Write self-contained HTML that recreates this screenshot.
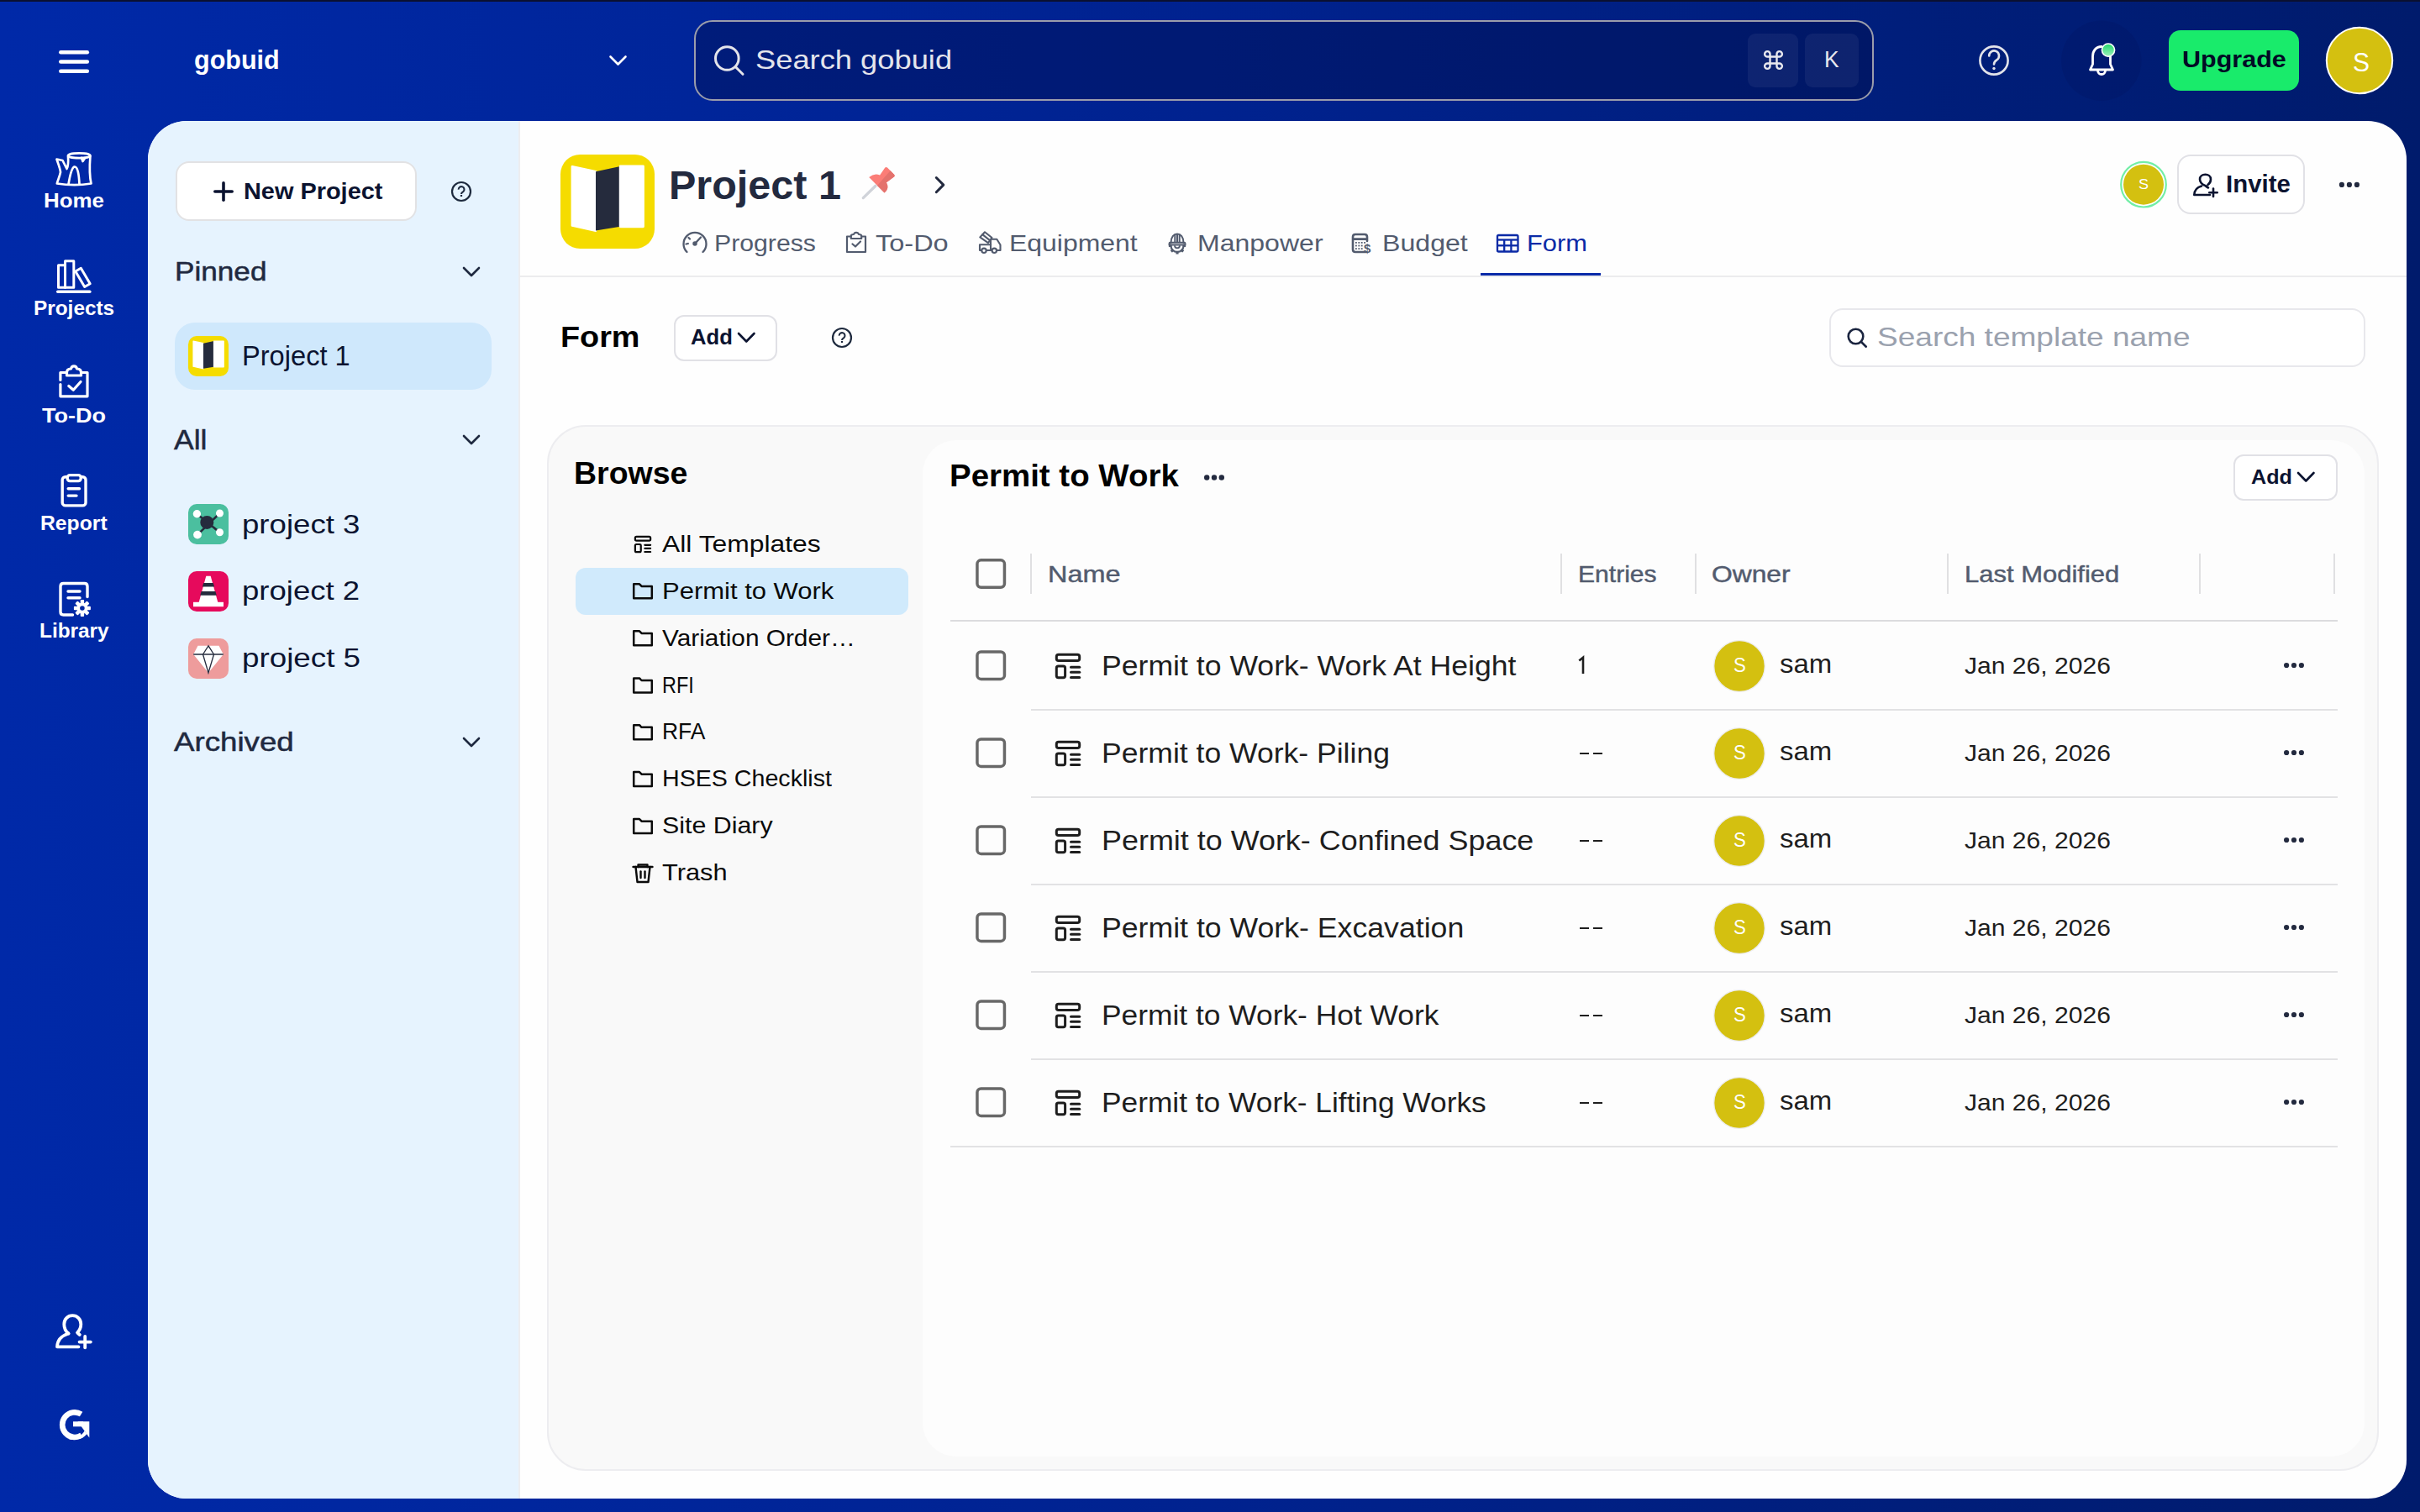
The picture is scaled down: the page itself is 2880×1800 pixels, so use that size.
<!DOCTYPE html>
<html><head><meta charset="utf-8"><title>gobuid - Form</title>
<style>
html,body{margin:0;padding:0;width:2880px;height:1800px;overflow:hidden;}
body{position:relative;font-family:"Liberation Sans",sans-serif;background:linear-gradient(90deg,#0029a8 0%,#00228f 50%,#001b6c 100%);}
.b{position:absolute;}
.t{position:absolute;white-space:nowrap;line-height:1;transform-origin:0 0;display:block;}
svg.ic{position:absolute;left:0;top:0;}
</style></head><body>
<div class="b" style="left:176px;top:144px;width:2688px;height:1640px;border-radius:46px;background:#fefefe;overflow:hidden;"></div><div class="b" style="left:176px;top:144px;width:441px;height:1640px;border-radius:46px 0 0 46px;background:#e6f3fe;"></div><div class="b" style="left:617px;top:144px;width:2px;height:1640px;background:#ededf0;"></div><div class="b" style="left:0px;top:0px;width:2880px;height:1.5px;background:#0a1030;"></div><div class="b" style="left:826px;top:24px;width:1404px;height:96px;box-sizing:border-box;border:2px solid #9a9dab;border-radius:22px;background:rgba(0,8,60,0.32);"></div><div class="b" style="left:2080px;top:40px;width:60px;height:64px;border-radius:9px;background:rgba(255,255,255,0.055);"></div><div class="b" style="left:2148px;top:40px;width:64px;height:64px;border-radius:9px;background:rgba(255,255,255,0.055);"></div><div class="b" style="left:2581px;top:36px;width:155px;height:72px;border-radius:14px;background:#19eb6b;"></div><div class="b" style="left:208.5px;top:192.4px;width:287.5px;height:70.2px;box-sizing:border-box;border:2px solid #e2e2e4;border-radius:16px;background:#fff;"></div><div class="b" style="left:208px;top:384px;width:377px;height:80px;border-radius:24px;background:#cfe8fc;"></div><div class="b" style="left:1762px;top:324.5px;width:143px;height:4px;background:#0a2aa8;"></div><div class="b" style="left:618px;top:328px;width:2246px;height:2px;background:#ececee;"></div><div class="b" style="left:2591.4px;top:184.2px;width:152px;height:71.1px;box-sizing:border-box;border:2px solid #e1e1e6;border-radius:16px;background:#fff;"></div><div class="b" style="left:801.7px;top:374.5px;width:123.5px;height:55px;box-sizing:border-box;border:2px solid #e1e1e6;border-radius:12px;background:#fff;"></div><div class="b" style="left:2176.7px;top:366.8px;width:638.3px;height:70.2px;box-sizing:border-box;border:2px solid #e8e8ec;border-radius:16px;background:#fff;"></div><div class="b" style="left:651px;top:506px;width:2180px;height:1245px;box-sizing:border-box;border:2px solid #ededf0;border-radius:46px;background:#f9f9f9;"></div><div class="b" style="left:685px;top:676px;width:396px;height:56px;border-radius:12px;background:#d0eafc;"></div><div class="b" style="left:1098px;top:524px;width:1716px;height:1210px;border-radius:40px;background:#fdfdfd;"></div><div class="b" style="left:2658px;top:541px;width:123.5px;height:54.5px;box-sizing:border-box;border:2px solid #e1e1e6;border-radius:12px;background:#fff;"></div><div class="b" style="left:1226px;top:659px;width:2px;height:48px;background:#e0e0e2;"></div><div class="b" style="left:1857px;top:659px;width:2px;height:48px;background:#e0e0e2;"></div><div class="b" style="left:2017px;top:659px;width:2px;height:48px;background:#e0e0e2;"></div><div class="b" style="left:2317px;top:659px;width:2px;height:48px;background:#e0e0e2;"></div><div class="b" style="left:2617px;top:659px;width:2px;height:48px;background:#e0e0e2;"></div><div class="b" style="left:2777px;top:659px;width:2px;height:48px;background:#e0e0e2;"></div><div class="b" style="left:1131px;top:737.8px;width:1651px;height:2px;background:#dcdcde;"></div><div class="b" style="left:1227px;top:844px;width:1555px;height:2px;background:#e2e2e4;"></div><div class="b" style="left:1879.5px;top:895.5px;width:11px;height:2.2px;background:#1e1e1e;"></div><div class="b" style="left:1895.5px;top:895.5px;width:11px;height:2.2px;background:#1e1e1e;"></div><div class="b" style="left:1227px;top:948px;width:1555px;height:2px;background:#e2e2e4;"></div><div class="b" style="left:1879.5px;top:999.5px;width:11px;height:2.2px;background:#1e1e1e;"></div><div class="b" style="left:1895.5px;top:999.5px;width:11px;height:2.2px;background:#1e1e1e;"></div><div class="b" style="left:1227px;top:1052px;width:1555px;height:2px;background:#e2e2e4;"></div><div class="b" style="left:1879.5px;top:1103.5px;width:11px;height:2.2px;background:#1e1e1e;"></div><div class="b" style="left:1895.5px;top:1103.5px;width:11px;height:2.2px;background:#1e1e1e;"></div><div class="b" style="left:1227px;top:1156px;width:1555px;height:2px;background:#e2e2e4;"></div><div class="b" style="left:1879.5px;top:1207.5px;width:11px;height:2.2px;background:#1e1e1e;"></div><div class="b" style="left:1895.5px;top:1207.5px;width:11px;height:2.2px;background:#1e1e1e;"></div><div class="b" style="left:1227px;top:1260px;width:1555px;height:2px;background:#e2e2e4;"></div><div class="b" style="left:1879.5px;top:1311.5px;width:11px;height:2.2px;background:#1e1e1e;"></div><div class="b" style="left:1895.5px;top:1311.5px;width:11px;height:2.2px;background:#1e1e1e;"></div><div class="b" style="left:1131px;top:1364px;width:1651px;height:2px;background:#e2e2e4;"></div>
<svg class="ic" width="2880" height="1800" viewBox="0 0 2880 1800">
<g stroke="#fff" stroke-width="4.5" stroke-linecap="round"><line x1="72.3" y1="62.3" x2="103.8" y2="62.3"/><line x1="72.3" y1="73.6" x2="103.8" y2="73.6"/><line x1="72.3" y1="84.8" x2="103.8" y2="84.8"/></g><polyline points="726.5,67.5 735.5,76.5 744.5,67.5" fill="none" stroke="#fff" stroke-width="2.6" stroke-linecap="round" stroke-linejoin="round"/><g fill="none" stroke="#e3e4ea" stroke-width="3" stroke-linecap="round"><circle cx="865.3" cy="69.5" r="13.8"/><line x1="875.5" y1="79.8" x2="884" y2="88.3"/></g><g transform="translate(2099.5,60.5)" fill="none" stroke="#e8e8ee" stroke-width="2.4"><path d="M7,7 H15 V15 H7 Z"/><path d="M7,7 V4 A3.2,3.2 0 1 0 4,7 H7"/><path d="M15,7 V4 A3.2,3.2 0 1 1 18,7 H15"/><path d="M7,15 V18 A3.2,3.2 0 1 1 4,15 H7"/><path d="M15,15 V18 A3.2,3.2 0 1 0 18,15 H15"/></g><circle cx="2373" cy="72" r="16.6" fill="none" stroke="#e3e4ea" stroke-width="2.6"/><path d="M2367.2,66.5 A5.9,5.9 0 1 1 2376.3,71.3 C2374,72.8 2373,74 2373,76.5" fill="none" stroke="#e3e4ea" stroke-width="2.6" stroke-linecap="round"/><circle cx="2373" cy="81.5" r="1.7" fill="#e3e4ea"/><circle cx="2500.8" cy="72.2" r="47.7" fill="rgba(0,5,50,0.09)"/><g fill="none" stroke="#fff" stroke-width="2.8" stroke-linejoin="round" stroke-linecap="round"><path d="M2501,55.5 C2494,55.5 2490.5,61 2490.5,67 V76.5 L2487.5,83 H2514.5 L2511.5,76.5 V67"/><path d="M2496.5,84 A4.5,4.5 0 0 0 2505.5,84"/></g><defs><linearGradient id="gd" x1="0" y1="0" x2="0" y2="1"><stop offset="0" stop-color="#1fd86a"/><stop offset="1" stop-color="#9ff2bd"/></linearGradient></defs><circle cx="2509" cy="59.6" r="7.6" fill="url(#gd)" stroke="#fff" stroke-width="1.6"/><circle cx="2808" cy="72" r="39.2" fill="#d4c010" stroke="#ffffff" stroke-width="2"/><g fill="none" stroke="#fff" stroke-width="2.7" stroke-linejoin="round" stroke-linecap="round"><ellipse cx="94.2" cy="185.3" rx="13.2" ry="2.9"/><path d="M81,186 C81.5,193 81,198 79.5,201 L74.5,191 L67.5,189.5 C69.5,196 71.5,200 72,205 C71,210 69,214 67.8,218.5 C81,220.5 96,220.5 108.5,218.5 C106.5,210 106.5,198 107.4,186"/><path d="M81.5,219.5 C83,210 85,200 88.5,198.5 C92.5,198 94,208 94.5,219.5"/><path d="M97,188 L98.5,192 L101,188.2"/></g><g fill="none" stroke="#fff" stroke-width="3" stroke-linejoin="round" stroke-linecap="round"><rect x="69.5" y="315.8" width="8" height="26.5"/><rect x="77.5" y="310.8" width="10.3" height="31.5"/><path d="M89.8,323 L96.3,319.3 L107.2,337.8 L100.7,341.5 Z"/><line x1="68.8" y1="347.2" x2="106.8" y2="347.2" stroke-width="3.6"/></g><g fill="none" stroke="#fff" stroke-width="3.2" stroke-linejoin="round" stroke-linecap="round"><path d="M79,443.5 H71.9 V452.5 M71.9,457.5 V471.8 H104 V443.5 H97"/><path d="M79.5,447 V443.5 C79.5,440 82,439 84.5,439 C85,436.5 86.5,435.8 88,435.8 C89.5,435.8 91,436.5 91.5,439 C94,439 96.5,440 96.5,443.5 V447 Z"/><polyline points="81.8,459.5 87.3,464.3 96,454.5"/></g><g fill="none" stroke="#fff" stroke-width="3.4" stroke-linejoin="round" stroke-linecap="round"><rect x="74.2" y="567.7" width="27.8" height="34.2" rx="3.5"/><rect x="80.2" y="565.6" width="16" height="7" rx="3" fill="#0027a2"/><line x1="81.2" y1="581.8" x2="94.5" y2="581.8"/><line x1="81.2" y1="590.1" x2="91" y2="590.1"/></g><g fill="none" stroke="#fff" stroke-width="3.4" stroke-linejoin="round" stroke-linecap="round"><path d="M104,710.5 V698 Q104,694.5 100.5,694.5 H75.5 Q72,694.5 72,698 V728.5 Q72,732 75.5,732 H86.5"/><line x1="81" y1="704" x2="95" y2="704"/><line x1="81" y1="711.7" x2="95" y2="711.7"/></g><g transform="translate(97.9,724)" fill="#fff"><circle r="6.6"/><rect x="-2.2" y="-10" width="4.4" height="5" rx="1" transform="rotate(0)"/><rect x="-2.2" y="-10" width="4.4" height="5" rx="1" transform="rotate(45)"/><rect x="-2.2" y="-10" width="4.4" height="5" rx="1" transform="rotate(90)"/><rect x="-2.2" y="-10" width="4.4" height="5" rx="1" transform="rotate(135)"/><rect x="-2.2" y="-10" width="4.4" height="5" rx="1" transform="rotate(180)"/><rect x="-2.2" y="-10" width="4.4" height="5" rx="1" transform="rotate(225)"/><rect x="-2.2" y="-10" width="4.4" height="5" rx="1" transform="rotate(270)"/><rect x="-2.2" y="-10" width="4.4" height="5" rx="1" transform="rotate(315)"/><circle r="2.8" fill="#0027a2"/></g><g fill="none" stroke="#fff" stroke-width="3.8" stroke-linecap="round" stroke-linejoin="round"><path d="M81.5,1587.5 C77.5,1584.5 76.3,1580 76.3,1576.5 C76.3,1570.5 80.5,1566.2 86.3,1566.2 C92,1566.2 96.3,1570.5 96.3,1576.5 C96.3,1580.5 94.5,1584 92,1586.5 L94.8,1589"/><path d="M81.5,1587.5 C72.5,1590.5 68.2,1596.5 68,1603.3 H93.5"/><line x1="101.2" y1="1591" x2="101.2" y2="1604.3"/><line x1="94.6" y1="1597.6" x2="107.8" y2="1597.6"/></g><g fill="#fff"><path d="M96.6,1683.5 A14.8,14.8 0 1 0 97,1708.6" fill="none" stroke="#fff" stroke-width="6.6"/><rect x="87" y="1692.3" width="12" height="6"/><polygon points="92.5,1692.3 106.3,1692.3 106.3,1711.6"/><path d="M80,1712.5 C88,1714.5 96,1711 100.5,1703.5 L103.5,1707 C98.5,1713.5 89,1716 80,1712.5 Z"/></g><g stroke="#0b1330" stroke-width="3.6" stroke-linecap="round"><line x1="266" y1="217.8" x2="266" y2="238.2"/><line x1="255.8" y1="228" x2="276.2" y2="228"/></g><circle cx="549" cy="228" r="11" fill="none" stroke="#1e2a3e" stroke-width="2.2"/><path d="M545.7,225.6 A3.4,3.4 0 1 1 551.3,228.1 C549.8,229.1 549,229.8 549,230.9" fill="none" stroke="#1e2a3e" stroke-width="2.09" stroke-linecap="butt"/><rect x="547.9" y="232" width="2.2" height="2" fill="#1e2a3e"/><polyline points="552,319 561.0,328 570,319" fill="none" stroke="#1f2940" stroke-width="2.6" stroke-linecap="round" stroke-linejoin="round"/><rect x="224" y="400" width="48" height="48" rx="10.0" fill="#f5dc00"/><polygon points="230.00,406.20 242.00,408.70 242.00,438.80 230.00,436.20" fill="#fff" stroke="#fff" stroke-width="1.20" stroke-linejoin="round"/><polygon points="242.00,408.70 254.50,406.00 254.50,436.80 242.00,438.80" fill="#252b3d"/><polygon points="254.50,406.00 266.20,406.00 266.20,436.80 254.50,436.80" fill="#fff" stroke="#fff" stroke-width="1.20" stroke-linejoin="round"/><polyline points="552,519 561.0,528 570,519" fill="none" stroke="#1f2940" stroke-width="2.6" stroke-linecap="round" stroke-linejoin="round"/><rect x="224" y="600" width="48" height="48" rx="10" fill="#4bbf9f"/><g stroke="#252b3d" stroke-width="2.6"><line x1="234.4" y1="611.8" x2="261.5" y2="633.8"/><line x1="261.5" y1="611" x2="235" y2="636.6"/></g><circle cx="246.3" cy="621.9" r="8" fill="#252b3d"/><g fill="#fff"><circle cx="234.4" cy="611.8" r="4.7"/><circle cx="261.5" cy="611" r="4.5"/><circle cx="235" cy="636.6" r="4.9"/><circle cx="261.5" cy="633.8" r="4.5"/></g><rect x="224" y="680" width="48" height="48" rx="10" fill="#e60a5c"/><polygon points="245.3,685.7 250.7,685.7 259.3,717 236.7,717" fill="#fff"/><rect x="230" y="716.8" width="36" height="5.4" fill="#fff"/><polygon points="242.2,694 253.8,694 255.1,698.5 240.9,698.5" fill="#252b3d"/><polygon points="239.6,703.9 256.4,703.9 257.8,708.8 238.2,708.8" fill="#252b3d"/><rect x="224" y="760" width="48" height="48" rx="10" fill="#ee9c9c"/><polygon points="235.5,768.8 260.5,768.8 265.8,779 248,801 230.2,779" fill="#fff"/><g fill="none" stroke="#252b3d" stroke-width="1.3"><line x1="230.2" y1="779" x2="265.8" y2="779"/><polygon points="248,768.8 241.5,779 248,801 254.5,779"/></g><polyline points="552,879 561.0,888 570,879" fill="none" stroke="#1f2940" stroke-width="2.6" stroke-linecap="round" stroke-linejoin="round"/><rect x="667" y="184" width="112" height="112" rx="23.3" fill="#f5dc00"/><polygon points="681.00,198.47 709.00,204.30 709.00,274.53 681.00,268.47" fill="#fff" stroke="#fff" stroke-width="2.80" stroke-linejoin="round"/><polygon points="709.00,204.30 738.17,198.00 738.17,269.87 709.00,274.53" fill="#252b3d"/><polygon points="738.17,198.00 765.47,198.00 765.47,269.87 738.17,269.87" fill="#fff" stroke="#fff" stroke-width="2.80" stroke-linejoin="round"/><defs><clipPath id="pinR"><polygon points="1090.1,168.6 1143.2,215.4 1065.2,304 1012.1,257.1"/></clipPath></defs><line x1="1027.3" y1="235.6" x2="1042" y2="221.3" stroke="#d0d3d9" stroke-width="3.3" stroke-linecap="round"/><path id="pinH" d="M1034.2,211 Q1040.5,205.5 1047.1,208.5 L1053.3,199.6 Q1054.6,198.3 1056,199.6 L1064.3,208 Q1065.4,209.5 1064,210.6 L1054.9,217.2 Q1058.8,224.5 1052.5,229.5 Z" fill="#fb7d77"/><path d="M1034.2,211 Q1040.5,205.5 1047.1,208.5 L1053.3,199.6 Q1054.6,198.3 1056,199.6 L1064.3,208 Q1065.4,209.5 1064,210.6 L1054.9,217.2 Q1058.8,224.5 1052.5,229.5 Z" fill="#e4726d" clip-path="url(#pinR)"/><polyline points="1114.3,211.5 1122.8,220.1 1114.3,228.7" fill="none" stroke="#232a3f" stroke-width="3" stroke-linecap="round" stroke-linejoin="round"/><g fill="none" stroke="#525b6e" stroke-width="2.3" stroke-linecap="round" stroke-linejoin="round"><path d="M817.5,300 A13.5,13.5 0 1 1 836.5,300"/><line x1="827" y1="290" x2="834" y2="282.5"/><circle cx="827" cy="290" r="1.6" fill="#525b6e"/><line x1="816.5" y1="290.5" x2="818.8" y2="290"/><line x1="819.5" y1="283" x2="821" y2="284.5"/></g><g fill="none" stroke="#525b6e" stroke-width="2.2" stroke-linejoin="round" stroke-linecap="round"><path d="M1012.5,281.5 H1008 V300 H1030 V281.5 H1025.5"/><path d="M1012.8,284 V281 C1012.8,279.5 1014,279 1016,279 C1016.5,277.3 1017.8,276.8 1019,276.8 C1020.2,276.8 1021.5,277.3 1022,279 C1024,279 1025.2,279.5 1025.2,281 V284 Z"/><polyline points="1014.5,290.5 1018,293.5 1024,287.5"/></g><g fill="none" stroke="#525b6e" stroke-width="2.1" stroke-linejoin="round" stroke-linecap="round"><path d="M1166,291.2 H1179 V284.8 H1186.3 L1190.5,291.5 V298 H1166 Z"/><line x1="1179" y1="291.2" x2="1179" y2="298"/><path d="M1166.3,282.4 L1172,276.3 L1180.5,283 L1176,289.2 Z"/><line x1="1169.2" y1="279.2" x2="1178" y2="286.1"/><circle cx="1171" cy="298.3" r="2.7" fill="#fff"/><circle cx="1183.3" cy="298.3" r="2.7" fill="#fff"/></g><g fill="none" stroke="#525b6e" stroke-width="2" stroke-linejoin="round" stroke-linecap="round"><path d="M1393.5,289 C1393.5,282 1397,278.5 1401,278.5 C1405,278.5 1408.5,282 1408.5,289"/><rect x="1391.5" y="288.8" width="19" height="2.8" rx="1.2"/><line x1="1398.3" y1="280" x2="1398.3" y2="288"/><line x1="1401" y1="279" x2="1401" y2="288"/><line x1="1403.7" y1="280" x2="1403.7" y2="288"/></g><g transform="translate(1401,292.3)"><path d="M-7.6,0 A7.6,7.6 0 0 0 7.6,0" fill="none" stroke="#525b6e" stroke-width="2.2"/><path d="M-3,0 A3,3 0 0 0 3,0" fill="none" stroke="#525b6e" stroke-width="1.8"/><g fill="#525b6e"><rect x="-1.6" y="-10.2" width="3.2" height="3.6" rx="0.6" transform="rotate(90)"/><rect x="-1.6" y="-10.2" width="3.2" height="3.6" rx="0.6" transform="rotate(135)"/><rect x="-1.6" y="-10.2" width="3.2" height="3.6" rx="0.6" transform="rotate(180)"/><rect x="-1.6" y="-10.2" width="3.2" height="3.6" rx="0.6" transform="rotate(225)"/><rect x="-1.6" y="-10.2" width="3.2" height="3.6" rx="0.6" transform="rotate(270)"/></g></g><g fill="none" stroke="#525b6e" stroke-width="2.6" stroke-linejoin="round" stroke-linecap="round"><path d="M1626,300 H1613 Q1610,300 1610,297 V282 Q1610,279 1613,279 H1624 Q1627,279 1627,282 V287"/><line x1="1610.5" y1="284.6" x2="1626.5" y2="284.6"/></g><g fill="#525b6e"><rect x="1613.0" y="288.0" width="1.8" height="1.8"/><rect x="1613.0" y="291.6" width="1.8" height="1.8"/><rect x="1613.0" y="295.2" width="1.8" height="1.8"/><rect x="1616.4" y="288.0" width="1.8" height="1.8"/><rect x="1616.4" y="291.6" width="1.8" height="1.8"/><rect x="1616.4" y="295.2" width="1.8" height="1.8"/><rect x="1619.8" y="288.0" width="1.8" height="1.8"/><rect x="1619.8" y="291.6" width="1.8" height="1.8"/><rect x="1619.8" y="295.2" width="1.8" height="1.8"/><rect x="1623.2" y="288.0" width="1.8" height="1.8"/></g><text x="1623" y="301" font-family="Liberation Sans" font-size="15" font-weight="700" fill="#525b6e">$</text><g fill="none" stroke="#0b2aa6" stroke-width="2.3" stroke-linejoin="round"><rect x="1782" y="280" width="24.5" height="19.5" rx="1.5"/><line x1="1782" y1="285.5" x2="1806.5" y2="285.5"/><line x1="1782" y1="292.3" x2="1806.5" y2="292.3"/><line x1="1790.2" y1="285.5" x2="1790.2" y2="299.5"/><line x1="1798.4" y1="285.5" x2="1798.4" y2="299.5"/></g><circle cx="2551" cy="219.7" r="26.8" fill="#fff" stroke="#72eea6" stroke-width="2.2"/><circle cx="2551" cy="219.7" r="24" fill="#d4c010"/><g fill="none" stroke="#0b1330" stroke-width="2.6" stroke-linecap="round" stroke-linejoin="round"><path d="M2628,223.5 C2626,222.5 2624.5,221 2624.5,221 C2620.5,220 2618,216.5 2618,213.5 C2618,209.8 2621,207.8 2624.5,207.8 C2628,207.8 2631,209.8 2631,213.5 C2631,216.5 2629.5,218.5 2627.5,220"/><path d="M2620,221.5 C2614.5,223 2611.5,227 2611.3,232 H2630"/><line x1="2634" y1="224.5" x2="2634" y2="234"/><line x1="2629.3" y1="229.3" x2="2638.7" y2="229.3"/></g><circle cx="2786.9" cy="219.9" r="3.1" fill="#232a3f"/><circle cx="2795.9" cy="219.9" r="3.1" fill="#232a3f"/><circle cx="2804.9" cy="219.9" r="3.1" fill="#232a3f"/><polyline points="879,397 888.25,406.5 897.5,397" fill="none" stroke="#0b1330" stroke-width="2.6" stroke-linecap="round" stroke-linejoin="round"/><circle cx="1002" cy="402" r="11" fill="none" stroke="#1e2a3e" stroke-width="2.2"/><path d="M998.7,399.6 A3.4,3.4 0 1 1 1004.3,402.1 C1002.8,403.1 1002,403.8 1002,404.9" fill="none" stroke="#1e2a3e" stroke-width="2.09" stroke-linecap="butt"/><rect x="1000.9" y="406" width="2.2" height="2" fill="#1e2a3e"/><g fill="none" stroke="#1b2540" stroke-width="2.6" stroke-linecap="round"><circle cx="2208.5" cy="400.5" r="8.8"/><line x1="2215" y1="407" x2="2220.8" y2="412.7"/></g><g fill="none" stroke="#0a0a0a" stroke-width="2.2" stroke-linecap="round" stroke-linejoin="round"><rect x="755.87" y="638.87" width="18.27" height="4.80" rx="1.60"/><rect x="755.87" y="648.00" width="6.87" height="9.13" rx="1.47"/><line x1="767.33" y1="648.80" x2="774.13" y2="648.80"/><line x1="767.33" y1="652.87" x2="774.13" y2="652.87"/><line x1="767.33" y1="657.00" x2="774.13" y2="657.00"/></g><path d="M754.2,712.3000000000001 V695.3000000000001 H761 L763.5,697.9 H775.8 V712.3000000000001 Z" fill="none" stroke="#0a0a0a" stroke-width="2.5" stroke-linejoin="round"/><path d="M754.2,768.3000000000001 V751.3000000000001 H761 L763.5,753.9 H775.8 V768.3000000000001 Z" fill="none" stroke="#0a0a0a" stroke-width="2.5" stroke-linejoin="round"/><path d="M754.2,824.4 V807.4 H761 L763.5,809.9999999999999 H775.8 V824.4 Z" fill="none" stroke="#0a0a0a" stroke-width="2.5" stroke-linejoin="round"/><path d="M754.2,880.2 V863.2 H761 L763.5,865.8 H775.8 V880.2 Z" fill="none" stroke="#0a0a0a" stroke-width="2.5" stroke-linejoin="round"/><path d="M754.2,936.1 V919.1 H761 L763.5,921.6999999999999 H775.8 V936.1 Z" fill="none" stroke="#0a0a0a" stroke-width="2.5" stroke-linejoin="round"/><path d="M754.2,992.1 V975.1 H761 L763.5,977.6999999999999 H775.8 V992.1 Z" fill="none" stroke="#0a0a0a" stroke-width="2.5" stroke-linejoin="round"/><g fill="none" stroke="#0a0a0a" stroke-width="2.4" stroke-linejoin="round" stroke-linecap="round"><line x1="753.5" y1="1032.0" x2="776.5" y2="1032.0"/><path d="M759.5,1032.0 V1029.5 H770.5 V1032.0"/><path d="M756.5,1032.0 L758.5,1050.0 H771.5 L773.5,1032.0"/><line x1="762.5" y1="1037.5" x2="762.5" y2="1045.0"/><line x1="767.5" y1="1037.5" x2="767.5" y2="1045.0"/></g><circle cx="1436.2" cy="568.5" r="3.2" fill="#232a3f"/><circle cx="1445.0" cy="568.5" r="3.2" fill="#232a3f"/><circle cx="1453.8" cy="568.5" r="3.2" fill="#232a3f"/><polyline points="2735,563 2744.25,572.5 2753.5,563" fill="none" stroke="#0b1330" stroke-width="2.6" stroke-linecap="round" stroke-linejoin="round"/><rect x="1162.95" y="666.85" width="32.5" height="32.5" rx="4.5" fill="none" stroke="#686868" stroke-width="3.5"/><rect x="1162.95" y="775.95" width="32.5" height="32.5" rx="4.5" fill="none" stroke="#686868" stroke-width="3.5"/><g fill="none" stroke="#1e1e1e" stroke-width="3" stroke-linecap="round" stroke-linejoin="round"><rect x="1257.30" y="779.30" width="27.40" height="7.20" rx="2.40"/><rect x="1257.30" y="793.00" width="10.30" height="13.70" rx="2.20"/><line x1="1274.50" y1="794.20" x2="1284.70" y2="794.20"/><line x1="1274.50" y1="800.30" x2="1284.70" y2="800.30"/><line x1="1274.50" y1="806.50" x2="1284.70" y2="806.50"/></g><path d="M1879.3,786.5 L1884,782.8 V802" fill="none" stroke="#1e1e1e" stroke-width="2.6" stroke-linejoin="miter"/><circle cx="2070" cy="793" r="30.3" fill="#d4c010" stroke="#ececec" stroke-width="1.3"/><circle cx="2721.1" cy="792" r="3.1" fill="#232a3f"/><circle cx="2730.0" cy="792" r="3.1" fill="#232a3f"/><circle cx="2738.9" cy="792" r="3.1" fill="#232a3f"/><rect x="1162.95" y="879.95" width="32.5" height="32.5" rx="4.5" fill="none" stroke="#686868" stroke-width="3.5"/><g fill="none" stroke="#1e1e1e" stroke-width="3" stroke-linecap="round" stroke-linejoin="round"><rect x="1257.30" y="883.30" width="27.40" height="7.20" rx="2.40"/><rect x="1257.30" y="897.00" width="10.30" height="13.70" rx="2.20"/><line x1="1274.50" y1="898.20" x2="1284.70" y2="898.20"/><line x1="1274.50" y1="904.30" x2="1284.70" y2="904.30"/><line x1="1274.50" y1="910.50" x2="1284.70" y2="910.50"/></g><circle cx="2070" cy="897" r="30.3" fill="#d4c010" stroke="#ececec" stroke-width="1.3"/><circle cx="2721.1" cy="896" r="3.1" fill="#232a3f"/><circle cx="2730.0" cy="896" r="3.1" fill="#232a3f"/><circle cx="2738.9" cy="896" r="3.1" fill="#232a3f"/><rect x="1162.95" y="983.95" width="32.5" height="32.5" rx="4.5" fill="none" stroke="#686868" stroke-width="3.5"/><g fill="none" stroke="#1e1e1e" stroke-width="3" stroke-linecap="round" stroke-linejoin="round"><rect x="1257.30" y="987.30" width="27.40" height="7.20" rx="2.40"/><rect x="1257.30" y="1001.00" width="10.30" height="13.70" rx="2.20"/><line x1="1274.50" y1="1002.20" x2="1284.70" y2="1002.20"/><line x1="1274.50" y1="1008.30" x2="1284.70" y2="1008.30"/><line x1="1274.50" y1="1014.50" x2="1284.70" y2="1014.50"/></g><circle cx="2070" cy="1001" r="30.3" fill="#d4c010" stroke="#ececec" stroke-width="1.3"/><circle cx="2721.1" cy="1000" r="3.1" fill="#232a3f"/><circle cx="2730.0" cy="1000" r="3.1" fill="#232a3f"/><circle cx="2738.9" cy="1000" r="3.1" fill="#232a3f"/><rect x="1162.95" y="1087.95" width="32.5" height="32.5" rx="4.5" fill="none" stroke="#686868" stroke-width="3.5"/><g fill="none" stroke="#1e1e1e" stroke-width="3" stroke-linecap="round" stroke-linejoin="round"><rect x="1257.30" y="1091.30" width="27.40" height="7.20" rx="2.40"/><rect x="1257.30" y="1105.00" width="10.30" height="13.70" rx="2.20"/><line x1="1274.50" y1="1106.20" x2="1284.70" y2="1106.20"/><line x1="1274.50" y1="1112.30" x2="1284.70" y2="1112.30"/><line x1="1274.50" y1="1118.50" x2="1284.70" y2="1118.50"/></g><circle cx="2070" cy="1105" r="30.3" fill="#d4c010" stroke="#ececec" stroke-width="1.3"/><circle cx="2721.1" cy="1104" r="3.1" fill="#232a3f"/><circle cx="2730.0" cy="1104" r="3.1" fill="#232a3f"/><circle cx="2738.9" cy="1104" r="3.1" fill="#232a3f"/><rect x="1162.95" y="1191.95" width="32.5" height="32.5" rx="4.5" fill="none" stroke="#686868" stroke-width="3.5"/><g fill="none" stroke="#1e1e1e" stroke-width="3" stroke-linecap="round" stroke-linejoin="round"><rect x="1257.30" y="1195.30" width="27.40" height="7.20" rx="2.40"/><rect x="1257.30" y="1209.00" width="10.30" height="13.70" rx="2.20"/><line x1="1274.50" y1="1210.20" x2="1284.70" y2="1210.20"/><line x1="1274.50" y1="1216.30" x2="1284.70" y2="1216.30"/><line x1="1274.50" y1="1222.50" x2="1284.70" y2="1222.50"/></g><circle cx="2070" cy="1209" r="30.3" fill="#d4c010" stroke="#ececec" stroke-width="1.3"/><circle cx="2721.1" cy="1208" r="3.1" fill="#232a3f"/><circle cx="2730.0" cy="1208" r="3.1" fill="#232a3f"/><circle cx="2738.9" cy="1208" r="3.1" fill="#232a3f"/><rect x="1162.95" y="1295.95" width="32.5" height="32.5" rx="4.5" fill="none" stroke="#686868" stroke-width="3.5"/><g fill="none" stroke="#1e1e1e" stroke-width="3" stroke-linecap="round" stroke-linejoin="round"><rect x="1257.30" y="1299.30" width="27.40" height="7.20" rx="2.40"/><rect x="1257.30" y="1313.00" width="10.30" height="13.70" rx="2.20"/><line x1="1274.50" y1="1314.20" x2="1284.70" y2="1314.20"/><line x1="1274.50" y1="1320.30" x2="1284.70" y2="1320.30"/><line x1="1274.50" y1="1326.50" x2="1284.70" y2="1326.50"/></g><circle cx="2070" cy="1313" r="30.3" fill="#d4c010" stroke="#ececec" stroke-width="1.3"/><circle cx="2721.1" cy="1312" r="3.1" fill="#232a3f"/><circle cx="2730.0" cy="1312" r="3.1" fill="#232a3f"/><circle cx="2738.9" cy="1312" r="3.1" fill="#232a3f"/>
</svg>
<span id="t0" class="t" style="left:231.33px;top:55.52px;font-size:30.45px;font-weight:700;color:#ffffff;transform:scaleX(1.0024);">gobuid</span><span id="t1" class="t" style="left:899.37px;top:56.43px;font-size:31.15px;font-weight:400;color:#e4e5ec;transform:scaleX(1.1657);">Search gobuid</span><span id="t2" class="t" style="left:2171.21px;top:57.35px;font-size:27.93px;font-weight:400;color:#e8e8ee;transform:scaleX(0.9428);">K</span><span id="t3" class="t" style="left:2596.63px;top:57.25px;font-size:27.93px;font-weight:700;color:#020b25;transform:scaleX(1.0930);">Upgrade</span><span id="t4" class="t" style="left:2799.65px;top:58.72px;font-size:30.45px;font-weight:400;color:#ffffff;transform:scaleX(0.9870);">S</span><span id="t5" class="t" style="left:52.13px;top:227.93px;font-size:23.46px;font-weight:700;color:#ffffff;transform:scaleX(1.1048);">Home</span><span id="t6" class="t" style="left:39.90px;top:355.93px;font-size:23.46px;font-weight:700;color:#ffffff;transform:scaleX(1.0388);">Projects</span><span id="t7" class="t" style="left:49.78px;top:484.13px;font-size:23.46px;font-weight:700;color:#ffffff;transform:scaleX(1.1532);">To-Do</span><span id="t8" class="t" style="left:48.49px;top:612.13px;font-size:23.46px;font-weight:700;color:#ffffff;transform:scaleX(1.0541);">Report</span><span id="t9" class="t" style="left:46.90px;top:739.83px;font-size:23.46px;font-weight:700;color:#ffffff;transform:scaleX(1.0389);">Library</span><span id="t10" class="t" style="left:290.10px;top:213.49px;font-size:28.35px;font-weight:700;color:#0b1330;transform:scaleX(1.0195);">New Project</span><span id="t11" class="t" style="left:207.82px;top:308.16px;font-size:31.70px;font-weight:400;color:#1f2940;transform:scaleX(1.1096);-webkit-text-stroke:0.5px #1f2940;">Pinned</span><span id="t12" class="t" style="left:287.53px;top:408.07px;font-size:32.40px;font-weight:400;color:#0b1330;transform:scaleX(1.0072);">Project 1</span><span id="t13" class="t" style="left:207.40px;top:507.57px;font-size:32.40px;font-weight:400;color:#1f2940;transform:scaleX(1.0949);-webkit-text-stroke:0.5px #1f2940;">All</span><span id="t14" class="t" style="left:288.35px;top:607.90px;font-size:32.12px;font-weight:400;color:#0b1330;transform:scaleX(1.1398);">project 3</span><span id="t15" class="t" style="left:288.36px;top:687.40px;font-size:32.12px;font-weight:400;color:#0b1330;transform:scaleX(1.1373);">project 2</span><span id="t16" class="t" style="left:288.34px;top:767.10px;font-size:32.12px;font-weight:400;color:#0b1330;transform:scaleX(1.1455);">project 5</span><span id="t17" class="t" style="left:207.35px;top:867.84px;font-size:31.84px;font-weight:400;color:#1f2940;transform:scaleX(1.1521);-webkit-text-stroke:0.5px #1f2940;">Archived</span><span id="t18" class="t" style="left:796.12px;top:196.89px;font-size:47.49px;font-weight:700;color:#232a3f;transform:scaleX(1.0213);">Project 1</span><span id="t19" class="t" style="left:850.04px;top:275.94px;font-size:27.23px;font-weight:400;color:#525b6e;transform:scaleX(1.1106);">Progress</span><span id="t20" class="t" style="left:1042.14px;top:275.94px;font-size:27.23px;font-weight:400;color:#525b6e;transform:scaleX(1.1939);">To-Do</span><span id="t21" class="t" style="left:1200.56px;top:275.94px;font-size:27.23px;font-weight:400;color:#525b6e;transform:scaleX(1.1727);">Equipment</span><span id="t22" class="t" style="left:1424.56px;top:275.94px;font-size:27.23px;font-weight:400;color:#525b6e;transform:scaleX(1.1768);">Manpower</span><span id="t23" class="t" style="left:1644.55px;top:275.94px;font-size:27.23px;font-weight:400;color:#525b6e;transform:scaleX(1.1797);">Budget</span><span id="t24" class="t" style="left:1816.61px;top:275.94px;font-size:27.23px;font-weight:400;color:#0b2aa6;transform:scaleX(1.1320);">Form</span><span id="t25" class="t" style="left:2545.19px;top:211.15px;font-size:17.18px;font-weight:400;color:#ffffff;transform:scaleX(1.0496);">S</span><span id="t26" class="t" style="left:2649.38px;top:205.06px;font-size:28.63px;font-weight:700;color:#0b1330;transform:scaleX(1.0277);">Invite</span><span id="t27" class="t" style="left:666.50px;top:383.73px;font-size:35.75px;font-weight:700;color:#000;transform:scaleX(1.0564);">Form</span><span id="t28" class="t" style="left:822.35px;top:388.95px;font-size:24.86px;font-weight:700;color:#0b1330;transform:scaleX(1.0299);">Add</span><span id="t29" class="t" style="left:2233.53px;top:385.67px;font-size:31.56px;font-weight:400;color:#9aa1ae;transform:scaleX(1.1736);">Search template name</span><span id="t30" class="t" style="left:683.31px;top:546.25px;font-size:36.31px;font-weight:700;color:#000;transform:scaleX(1.0326);">Browse</span><span id="t31" class="t" style="left:788.07px;top:632.98px;font-size:28.49px;font-weight:400;color:#0a0a0a;transform:scaleX(1.1175);">All Templates</span><span id="t32" class="t" style="left:788.10px;top:688.58px;font-size:28.49px;font-weight:400;color:#0a0a0a;transform:scaleX(1.0881);">Permit to Work</span><span id="t33" class="t" style="left:788.16px;top:744.58px;font-size:28.49px;font-weight:400;color:#0a0a0a;transform:scaleX(1.0467);">Variation Order…</span><span id="t34" class="t" style="left:788.44px;top:800.68px;font-size:28.49px;font-weight:400;color:#0a0a0a;transform:scaleX(0.8231);">RFI</span><span id="t35" class="t" style="left:788.31px;top:856.48px;font-size:28.49px;font-weight:400;color:#0a0a0a;transform:scaleX(0.9284);">RFA</span><span id="t36" class="t" style="left:788.21px;top:912.38px;font-size:28.49px;font-weight:400;color:#0a0a0a;transform:scaleX(1.0043);">HSES Checklist</span><span id="t37" class="t" style="left:788.13px;top:968.38px;font-size:28.49px;font-weight:400;color:#0a0a0a;transform:scaleX(1.0656);">Site Diary</span><span id="t38" class="t" style="left:788.12px;top:1024.38px;font-size:28.49px;font-weight:400;color:#0a0a0a;transform:scaleX(1.0801);">Trash</span><span id="t39" class="t" style="left:1130.27px;top:549.25px;font-size:36.31px;font-weight:700;color:#000;transform:scaleX(1.0594);">Permit to Work</span><span id="t40" class="t" style="left:2678.87px;top:555.66px;font-size:24.02px;font-weight:700;color:#0b1330;transform:scaleX(1.0460);">Add</span><span id="t41" class="t" style="left:1246.84px;top:668.51px;font-size:28.21px;font-weight:400;color:#525b6e;transform:scaleX(1.1499);-webkit-text-stroke:0.45px #525b6e;">Name</span><span id="t42" class="t" style="left:1878.35px;top:668.51px;font-size:28.21px;font-weight:400;color:#525b6e;transform:scaleX(1.0664);-webkit-text-stroke:0.45px #525b6e;">Entries</span><span id="t43" class="t" style="left:2036.57px;top:668.51px;font-size:28.21px;font-weight:400;color:#525b6e;transform:scaleX(1.1270);-webkit-text-stroke:0.45px #525b6e;">Owner</span><span id="t44" class="t" style="left:2337.61px;top:668.51px;font-size:28.21px;font-weight:400;color:#525b6e;transform:scaleX(1.0984);-webkit-text-stroke:0.45px #525b6e;">Last Modified</span><span id="t45" class="t" style="left:1311.10px;top:776.47px;font-size:33.10px;font-weight:400;color:#1e1e1e;transform:scaleX(1.0766);">Permit to Work- Work At Height</span><span id="t46" class="t" style="left:2063.00px;top:781.37px;font-size:23.18px;font-weight:400;color:#ffffff;transform:scaleX(0.9591);">S</span><span id="t47" class="t" style="left:2117.82px;top:775.24px;font-size:31.60px;font-weight:400;color:#1e1e1e;transform:scaleX(1.0424);">sam</span><span id="t48" class="t" style="left:2337.65px;top:778.11px;font-size:28.21px;font-weight:400;color:#1e1e1e;transform:scaleX(1.0665);">Jan 26, 2026</span><span id="t49" class="t" style="left:1311.10px;top:880.47px;font-size:33.10px;font-weight:400;color:#1e1e1e;transform:scaleX(1.0742);">Permit to Work- Piling</span><span id="t50" class="t" style="left:2063.00px;top:885.37px;font-size:23.18px;font-weight:400;color:#ffffff;transform:scaleX(0.9591);">S</span><span id="t51" class="t" style="left:2117.82px;top:879.24px;font-size:31.60px;font-weight:400;color:#1e1e1e;transform:scaleX(1.0424);">sam</span><span id="t52" class="t" style="left:2337.65px;top:882.11px;font-size:28.21px;font-weight:400;color:#1e1e1e;transform:scaleX(1.0665);">Jan 26, 2026</span><span id="t53" class="t" style="left:1311.08px;top:984.47px;font-size:33.10px;font-weight:400;color:#1e1e1e;transform:scaleX(1.0858);">Permit to Work- Confined Space</span><span id="t54" class="t" style="left:2063.00px;top:989.37px;font-size:23.18px;font-weight:400;color:#ffffff;transform:scaleX(0.9591);">S</span><span id="t55" class="t" style="left:2117.82px;top:983.24px;font-size:31.60px;font-weight:400;color:#1e1e1e;transform:scaleX(1.0424);">sam</span><span id="t56" class="t" style="left:2337.65px;top:986.11px;font-size:28.21px;font-weight:400;color:#1e1e1e;transform:scaleX(1.0665);">Jan 26, 2026</span><span id="t57" class="t" style="left:1311.09px;top:1088.47px;font-size:33.10px;font-weight:400;color:#1e1e1e;transform:scaleX(1.0777);">Permit to Work- Excavation</span><span id="t58" class="t" style="left:2063.00px;top:1093.37px;font-size:23.18px;font-weight:400;color:#ffffff;transform:scaleX(0.9591);">S</span><span id="t59" class="t" style="left:2117.82px;top:1087.24px;font-size:31.60px;font-weight:400;color:#1e1e1e;transform:scaleX(1.0424);">sam</span><span id="t60" class="t" style="left:2337.65px;top:1090.11px;font-size:28.21px;font-weight:400;color:#1e1e1e;transform:scaleX(1.0665);">Jan 26, 2026</span><span id="t61" class="t" style="left:1311.11px;top:1192.47px;font-size:33.10px;font-weight:400;color:#1e1e1e;transform:scaleX(1.0688);">Permit to Work- Hot Work</span><span id="t62" class="t" style="left:2063.00px;top:1197.37px;font-size:23.18px;font-weight:400;color:#ffffff;transform:scaleX(0.9591);">S</span><span id="t63" class="t" style="left:2117.82px;top:1191.24px;font-size:31.60px;font-weight:400;color:#1e1e1e;transform:scaleX(1.0424);">sam</span><span id="t64" class="t" style="left:2337.65px;top:1194.11px;font-size:28.21px;font-weight:400;color:#1e1e1e;transform:scaleX(1.0665);">Jan 26, 2026</span><span id="t65" class="t" style="left:1311.11px;top:1296.47px;font-size:33.10px;font-weight:400;color:#1e1e1e;transform:scaleX(1.0673);">Permit to Work- Lifting Works</span><span id="t66" class="t" style="left:2063.00px;top:1301.37px;font-size:23.18px;font-weight:400;color:#ffffff;transform:scaleX(0.9591);">S</span><span id="t67" class="t" style="left:2117.82px;top:1295.24px;font-size:31.60px;font-weight:400;color:#1e1e1e;transform:scaleX(1.0424);">sam</span><span id="t68" class="t" style="left:2337.65px;top:1298.11px;font-size:28.21px;font-weight:400;color:#1e1e1e;transform:scaleX(1.0665);">Jan 26, 2026</span>
</body></html>
